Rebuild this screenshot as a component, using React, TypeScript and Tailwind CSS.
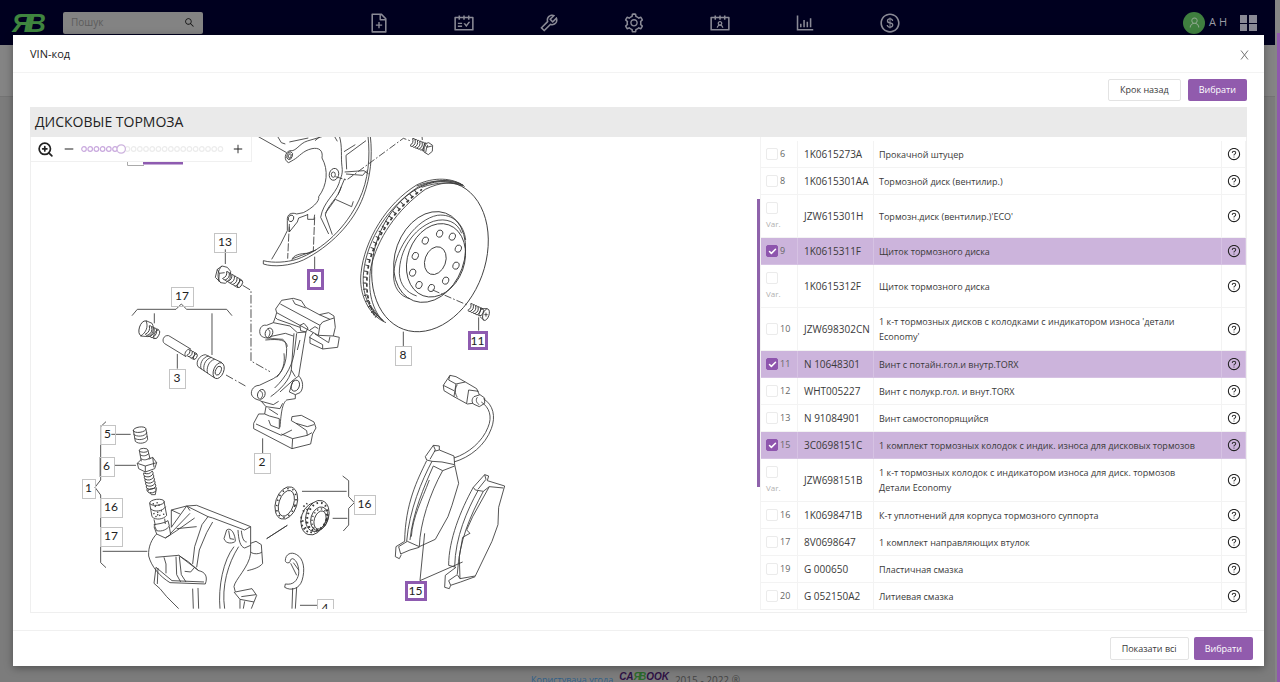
import { useState } from 'react'
import {
  AiOutlineBarChart,
  AiOutlineContacts,
  AiOutlineDollar,
  AiOutlineFileAdd,
  AiOutlineMinus,
  AiOutlinePlus,
  AiOutlineQuestionCircle,
  AiOutlineSchedule,
  AiOutlineSearch,
  AiOutlineSetting,
  AiOutlineTool,
  AiOutlineUser,
} from 'react-icons/ai'
import { Check, ZoomIn } from 'lucide-react'

interface Part {
  pos?: string
  code: string
  name: string
}

const parts: Part[] = [
  { pos: '6', code: '1K0615273A', name: 'Прокачной штуцер' },
  { pos: '8', code: '1K0615301AA', name: 'Тормозной диск (вентилир.)' },
  { code: 'JZW615301H', name: "Тормозн.диск (вентилир.)'ECO'" },
  { pos: '9', code: '1K0615311F', name: 'Щиток тормозного диска' },
  { code: '1K0615312F', name: 'Щиток тормозного диска' },
  { pos: '10', code: 'JZW698302CN', name: "1 к-т тормозных дисков с колодками с индикатором износа 'детали Economy'" },
  { pos: '11', code: 'N 10648301', name: 'Винт с потайн.гол.и внутр.TORX' },
  { pos: '12', code: 'WHT005227', name: 'Винт с полукр.гол. и внут.TORX' },
  { pos: '13', code: 'N 91084901', name: 'Винт самостопорящийся' },
  { pos: '15', code: '3C0698151C', name: '1 комплект тормозных колодок с индик. износа для дисковых тормозов' },
  { code: 'JZW698151B', name: '1 к-т тормозных колодок с индикатором износа для диск. тормозов Детали Economy' },
  { pos: '16', code: '1K0698471B', name: 'К-т уплотнений для корпуса тормозного суппорта' },
  { pos: '17', code: '8V0698647', name: '1 комплект направляющих втулок' },
  { pos: '19', code: 'G 000650', name: 'Пластичная смазка' },
  { pos: '20', code: 'G 052150A2', name: 'Литиевая смазка' },
]

const navItems = [
  { label: 'Новий запис', Icon: AiOutlineFileAdd },
  { label: 'Календар', Icon: AiOutlineSchedule },
  { label: 'Ремонт', Icon: AiOutlineTool },
  { label: 'Налаштування', Icon: AiOutlineSetting },
  { label: 'Контакти', Icon: AiOutlineContacts },
  { label: 'Звіти', Icon: AiOutlineBarChart },
  { label: 'Фінанси', Icon: AiOutlineDollar },
]

const callouts = [
  { text: '13', x: 214, y: 233, w: 22, h: 19 },
  { text: '17', x: 171, y: 287, w: 22, h: 19 },
  { text: '3', x: 169, y: 369, w: 16, h: 19 },
  { text: '2', x: 254, y: 453, w: 16, h: 20 },
  { text: '8', x: 395, y: 346, w: 16, h: 19 },
  { text: '9', x: 308, y: 270, w: 14, h: 18, active: true },
  { text: '11', x: 469, y: 332, w: 17, h: 16, active: true },
  { text: '5', x: 100, y: 425, w: 15, h: 19 },
  { text: '6', x: 99, y: 457, w: 15, h: 19 },
  { text: '1', x: 82, y: 479, w: 13, h: 19 },
  { text: '16', x: 100, y: 498, w: 22, h: 19 },
  { text: '17', x: 100, y: 527, w: 22, h: 19 },
  { text: '16', x: 354, y: 495, w: 21, h: 19 },
  { text: '15', x: 406, y: 582, w: 19, h: 17, active: true },
  { text: '4', x: 317, y: 599, w: 16, h: 19 },
]

const boltHoles = [
  [599, 311], [637, 320], [655, 356], [648, 407], [617, 452],
  [574, 474], [537, 465], [518, 428], [526, 378], [556, 332],
]

interface ThreadProps {
  from: [number, number]
  to: [number, number]
  turns: number
  r: number
}

// Threaded shank: two edges, the turns and a rounded tip
function Thread({ from, to, turns, r }: ThreadProps) {
  const length = Math.hypot(to[0] - from[0], to[1] - from[1])
  const angle = (Math.atan2(to[1] - from[1], to[0] - from[0]) * 180) / Math.PI
  const pitch = length / turns
  return (
    <g transform={`translate(${from[0]} ${from[1]}) rotate(${angle})`}>
      <ellipse cx={length} cy={0} rx={r / 2} ry={r} fill="#fff" />
      {Array.from({ length: turns }, (_, i) => (
        <path
          key={i}
          d={`M${i * pitch} ${-r} q${pitch * 0.6} -3 ${pitch} 0 M${i * pitch} ${r} q${pitch * 0.6} 3 ${pitch} 0 M${i * pitch} ${-r} q${r * 0.8} ${r} 0 ${r * 2}`}
        />
      ))}
    </g>
  )
}

function Shield() {
  return (
    <>
      <path d="M70 392V402C100 412 150 408 190 390C270 350 340 280 370 200C392 140 398 80 391 18" />
      <path d="M70 392C100 400 140 397 170 388C250 360 320 290 357 210C386 150 391 80 384 18" />
      <path d="M95 388L122 342L142 302V272C140 252 155 246 170 252L190 248C214 236 240 215 236 200C262 165 266 120 246 84C250 60 236 52 216 56C188 62 178 80 160 90L146 98C130 92 134 66 150 62C168 66 178 40 202 33L246 20" />
      <path d="M148 290V306L172 276L176 264L203 254M203 252V268H222L224 254" />
      <ellipse cx="153" cy="265" rx="8" ry="10" transform="rotate(20 153 265)" />
      <ellipse cx="149" cy="77" rx="8" ry="12" transform="rotate(20 149 77)" />
      <ellipse cx="149" cy="78" rx="4" ry="7" transform="rotate(20 149 78)" />
      <path d="M55 20L140 68M112 18L124 38L136 42M148 36L205 24M225 32L240 20" />
      <path d="M284 20L292 34M298 18C308 50 302 80 306 110C310 135 300 145 297 160C285 195 250 215 242 262L266 312" />
      <path d="M314 146L294 194M304 170C295 205 262 225 256 255L277 314M256 250L286 208L335 230L340 214" />
      <path d="M312 65L346 44M318 76L378 32M318 76L320 118M314 126L372 122L386 132M318 132L368 136L380 122" />
      <ellipse cx="282" cy="133" rx="14" ry="18" transform="rotate(15 282 133)" />
      <ellipse cx="280" cy="134" rx="6" ry="8" />
      <path d="M148 282L143 386M224 262L220 362" strokeDasharray="24 5" />
      <path d="M156 390C158 376 180 370 205 370L222 362M158 386L228 360M224 380V418" />
      <path d="M286 140L320 150L490 25L510 32" strokeDasharray="22 6 5 6" />
      <Thread from={[514, 36]} to={[556, 52]} turns={6} r={11} />
      <path fill="#fff" d="M553 42L566 38L578 46L577 64L565 74L552 66ZM553 42L560 52L576 48M560 52L557 68M546 18L547 30" />
    </>
  )
}

function Disc() {
  return (
    <>
      <path d="M438 578C385 556 356 490 363 430C373 330 440 220 530 165C580 140 640 142 674 170" />
      <path d="M432 574C385 540 364 490 371 425C382 325 446 228 536 170C590 146 640 146 670 166" />
      <path d="M410 560C374 520 368 470 379 415C394 330 454 240 534 178" strokeWidth="11" strokeDasharray="3 15" />
      <path d="M404 556C378 510 376 460 386 405C404 325 460 242 546 178" strokeWidth="5" strokeDasharray="10 8" />
      <path d="M530 168C580 148 630 148 665 164M545 172C590 156 636 155 668 168M400 545L430 572M390 525L420 565" />
      <path d="M428 572C390 530 384 470 392 415C412 325 470 240 556 178C600 156 640 154 670 166" />
      <ellipse cx="570" cy="380" rx="166" ry="232" transform="rotate(20 570 380)" />
      <ellipse cx="569" cy="381" rx="103" ry="140" transform="rotate(20 569 381)" />
      <path d="M677 330C672 285 640 250 592 256C530 268 468 350 461 430C458 470 480 500 510 506" />
      <path d="M665 310C652 276 620 262 580 274C520 296 478 360 478 430C480 465 500 488 530 498" />
      <ellipse cx="588" cy="391" rx="85" ry="113" transform="rotate(20 588 391)" />
      <ellipse cx="586" cy="392" rx="31" ry="43" transform="rotate(20 586 392)" />
      {boltHoles.map(([x, y]) => (
        <ellipse key={`${x}-${y}`} cx={x} cy={y} rx="9" ry="11" transform={`rotate(20 ${x} ${y})`} />
      ))}
      <path d="M578 480L684 526" strokeDasharray="22 6 5 6" />
      <Thread from={[688, 531]} to={[724, 547]} turns={5} r={11} />
      <ellipse cx="738" cy="554" rx="9" ry="18" transform="rotate(18 738 554)" fill="#fff" />
      <path d="M722 536L742 536M720 560L732 571M733 554H743M738 548V560M716 562V602M490 605V648" />
    </>
  )
}

function Carrier() {
  return (
    <>
      <path d="M376 58V102M96 257L112 238H228L244 222L260 238H380L396 257M163 250V280M336 250V375M232 372V416M488 625V670" />
      <path fill="#fff" d="M352 118L366 108L382 112L392 124L390 146L376 160L362 158L346 142Z" />
      <path d="M352 118L358 130L356 154M358 130L374 128M366 108C352 120 350 146 362 158" />
      <Thread from={[374, 135]} to={[420, 162]} turns={6} r={12} />
      <path d="M428 166L453 181V393L510 425" strokeDasharray="26 6 5 6" />

      <ellipse cx="130" cy="295" rx="12" ry="23" transform="rotate(18 130 295)" />
      <path fill="#fff" d="M138 272L156 280C166 296 156 318 144 320L122 318C138 308 146 290 138 272" />
      <Thread from={[142, 300]} to={[170, 313]} turns={4} r={14} />

      <path d="M206 317L272 357M194 341L258 380M206 317C190 314 184 334 194 341M272 357C258 356 250 374 258 380" />
      <Thread from={[265, 368]} to={[286, 380]} turns={3} r={9} />

      <path d="M316 374L366 398M294 410L344 444" />
      <path d="M316 374C298 376 286 396 294 410M326 378C306 382 298 404 304 418M334 382C314 388 308 410 313 424M344 388C326 392 318 416 323 430" />
      <ellipse cx="356" cy="422" rx="15" ry="25" transform="rotate(22 356 422)" />
      <ellipse cx="355" cy="422" rx="8" ry="14" transform="rotate(22 355 422)" />
      <path d="M378 435L440 470" strokeDasharray="24 7 5 7" />

      <path d="M527 237L545 211L580 205L604 212L617 232L658 254L686 248L702 258L706 292L700 318L718 322L713 352L668 357L630 340V320L640 308M527 237L530 248L655 316M541 222L660 286M530 248L526 262L532 268L600 292M578 209L585 222L617 234M658 254L690 268L702 264M660 286L668 276L690 268M655 316L700 318M655 316L660 286M645 312L686 338L690 320M628 322L668 344V357" />
      <path d="M526 262L520 278L500 286C484 282 474 300 482 316C494 328 508 322 518 326L548 328C558 334 558 344 560 356C560 400 548 430 520 446L478 466C458 466 448 488 458 500C466 510 476 508 484 514L498 530L540 536L548 520" />
      <path d="M520 278L570 288L592 308L618 306L612 340L596 438C610 450 612 476 600 488L586 494V506L560 510C548 520 544 540 540 592" />
      <path d="M496 330C540 326 560 330 562 350M510 320L556 310L580 318M582 310L574 420C570 450 540 480 512 500M590 310L584 360C580 400 560 440 524 474M600 330L592 360M574 420L586 440M552 370C556 400 548 424 530 442M596 438L580 450L568 486L586 494M580 450L540 486" />
      <ellipse cx="507" cy="309" rx="11" ry="15" transform="rotate(20 507 309)" />
      <path d="M503 298C512 300 512 314 504 322" />
      <ellipse cx="484" cy="493" rx="11" ry="15" transform="rotate(20 484 493)" />
      <path d="M480 482C490 486 490 500 482 506" />
      <ellipse cx="586" cy="467" rx="12" ry="17" transform="rotate(20 586 467)" />
      <path d="M600 286L612 280L624 294L618 306L602 302ZM630 300L645 290L655 296" />
      <path d="M498 530L494 552H476L461 580V596L576 656L632 642L638 612L648 594L642 576L604 556L576 560L574 572L588 580L622 590L642 584M494 552L508 558L538 566V596L512 586L506 570M468 582L544 616L576 600M576 656L578 626L544 612M578 626L622 616L620 602L588 580M622 616L636 608M506 536L534 554M484 514L520 524L536 514" />
    </>
  )
}

function Caliper() {
  return (
    <>
      <path d="M78 65L62 80V240L45 262L62 285V488L78 503M94 103H152M104 196H168M68 454H202" />
      <path d="M160 90L166 124C176 134 200 130 203 118L198 88M160 102C170 112 194 110 201 98M163 114C172 122 196 120 202 108" />
      <ellipse cx="179" cy="89" rx="19" ry="8" transform="rotate(-8 179 89)" />
      <ellipse cx="191" cy="151" rx="13" ry="6" />
      <path d="M178 151L184 184M204 151L210 176M180 164C188 170 200 168 207 160M184 176C190 182 204 180 210 172M184 178L172 190L176 206L196 216L224 206L230 188L218 172L206 178M172 190L196 198L230 188M196 198V216M218 172L222 202" />
      <Thread from={[204, 216]} to={[216, 272]} turns={6} r={13} />
      <path d="M210 276L214 284H226L228 272" />
      <ellipse cx="231" cy="307" rx="22" ry="9" transform="rotate(-6 231 307)" />
      <path d="M209 310L216 350C226 362 252 358 260 346L252 304M212 326C222 338 248 334 257 320M222 358L226 376M254 356L256 372" />
      <path d="M218 312L240 306M224 320L246 312M220 342L250 330M226 350L254 342M232 346L240 336" strokeWidth="4" strokeDasharray="4 8" />
      <path d="M222 374L230 392C246 396 262 388 268 378L264 362C254 370 232 372 222 374M222 380L230 402L256 414L272 404L268 380" />
      <path d="M230 402C216 416 204 440 206 468C214 500 240 530 270 548L376 552C384 530 376 516 356 512L296 466L226 472M274 382L320 318L350 316L512 380V460C508 500 464 540 462 560L466 576L516 566L530 586L522 606L514 626" />
      <path d="M274 382V330L320 318L384 350L366 374L344 440L338 492M398 366L380 398L358 450L350 502M384 350L398 354L494 390L512 380M274 330L300 342M256 414L290 392L344 354M270 402L330 340M290 386L350 380M322 320L330 332" />
      <path d="M228 502L222 550L240 566L260 590L296 626M234 504L232 552M252 472L258 492L258 520M288 470L290 524L302 546M298 470L304 524L318 546M296 466L326 486L356 512M314 514L332 516L344 502M228 502L276 542L372 546" />
      <path d="M338 566L340 626M354 564L356 626M462 440C430 480 414 560 420 626M476 440C444 490 424 560 434 626M440 390L432 416C438 434 460 430 466 424C466 404 454 380 440 390M446 392L450 416L462 418M474 390C476 420 480 440 494 444L512 436M484 392C486 410 490 426 500 426" />
      <path d="M512 430L528 424L544 434L548 490C540 502 520 508 502 512M512 456C520 464 540 462 546 456M462 576L480 598L522 606M480 598V626M494 604L490 626M484 590L528 584M560 416L622 376" />
    </>
  )
}

function Pads() {
  return (
    <>
      <path d="M278 318L296 332V380L313 398L296 415V465L280 483M156 364H290M248 445H292M50 506L112 466M150 706H204" />
      <ellipse cx="109" cy="399" rx="32" ry="50" transform="rotate(18 109 399)" />
      <ellipse cx="109" cy="400" rx="22" ry="40" transform="rotate(18 109 400)" />
      <ellipse cx="109" cy="399" rx="27" ry="45" transform="rotate(18 109 399)" strokeWidth="5" strokeDasharray="4 12" />
      <ellipse cx="190" cy="446" rx="36" ry="50" transform="rotate(18 190 446)" />
      <ellipse cx="202" cy="438" rx="34" ry="48" transform="rotate(18 202 438)" fill="#fff" />
      <ellipse cx="208" cy="446" rx="25" ry="36" transform="rotate(18 208 446)" />
      <ellipse cx="210" cy="450" rx="17" ry="28" transform="rotate(18 210 450)" />
      <ellipse cx="202" cy="440" rx="29" ry="43" transform="rotate(18 202 440)" strokeWidth="6" strokeDasharray="5 9" />
      <ellipse cx="208" cy="448" rx="21" ry="32" transform="rotate(18 208 448)" strokeWidth="4" strokeDasharray="4 8" />
      <path d="M154 440C150 470 166 492 194 486M160 410L172 400M158 424L178 416M156 452L176 460M164 474L182 470" strokeWidth="5" strokeDasharray="5 7" />

      <path d="M106 572C106 552 124 544 140 554C162 566 166 600 156 632C148 656 124 664 104 652L106 642C130 646 142 632 146 612C148 590 140 570 128 566C120 566 122 574 118 578C110 580 106 576 106 572M122 580L140 616M130 578L146 600M128 654L126 716M140 652L136 716" />

      <path d="M580 46L600 16L618 20L646 36L680 56L688 74L668 100L652 102L612 80L582 62ZM600 16L596 30L618 42L646 36M618 42L612 80M622 44C614 56 614 70 622 82M656 60L650 100M656 60L686 64M580 46L612 62" />
      <path fill="#fff" d="M672 80L690 74L704 84V100L688 110L670 102C664 94 666 86 672 80M682 82C676 90 680 100 688 104" />
      <path d="M700 86C730 104 738 140 724 176C706 226 660 262 612 276M694 96C718 112 728 140 714 172C698 214 656 250 612 264" />
      <path d="M526 260L550 226L568 228V240L612 258L614 284L626 340L606 406L594 440L556 508L508 530L472 514L446 530L452 552L480 540L508 532M526 260L530 270L546 274M550 226L556 240L540 268M568 240L552 244M546 274L576 276L614 284M546 274C516 330 478 420 470 514M530 272C502 330 466 400 464 514L438 530L436 560L448 566L454 554M550 288L578 302L614 288M578 302C540 370 510 460 508 530M550 288C522 350 488 430 480 510M538 330C516 390 488 440 484 500" />
      <path d="M670 352L704 314L716 318L712 332L764 348L746 412L744 464L726 514L676 618L630 626L622 614L596 632L602 646L632 636L676 620M670 352L676 360L700 364L718 350M704 314L708 328L684 358M718 350L760 354M670 352C632 420 596 510 596 586L618 592L586 616L584 652L598 656L602 646M684 362C652 420 616 500 614 590M700 364C660 440 628 510 622 612M718 350L668 440L650 480L660 490L638 502L628 560L630 626" />
      <path d="M524 490L510 632M638 576L510 632" />
    </>
  )
}

function Diagram() {
  return (
    <svg
      viewBox="31 137 726 472"
      preserveAspectRatio="xMinYMin meet"
      className="block w-full"
      role="img"
      aria-label="Дисковые тормоза"
    >
      <g fill="none" stroke="#3a3a3a" strokeWidth="2.6" strokeLinejoin="round">
        <g transform="translate(240 130) scale(0.3333)">
          <Shield />
          <Disc />
        </g>
        <g transform="translate(100 230) scale(0.3333)">
          <Carrier />
        </g>
        <g transform="translate(80 400) scale(0.3333)">
          <Caliper />
        </g>
        <g transform="translate(250 370) scale(0.3333)">
          <Pads />
        </g>
      </g>
      <path d="M127.5 160V165.5H144" fill="none" stroke="#aaa" />
      <path d="M143 163H183" stroke="#8e5bb0" strokeWidth="3" />
      {callouts.map((c) => (
        <g key={`${c.x}-${c.y}`}>
          <rect
            x={c.x + 0.5}
            y={c.y + 0.5}
            width={c.w}
            height={c.h}
            fill="none"
            stroke={c.active ? '#8e5bb0' : '#c4c4c4'}
            strokeWidth={c.active ? 3 : 1}
          />
          <text x={c.x + c.w / 2} y={c.y + 13} textAnchor="middle" className="font-['Lato',sans-serif] text-[12px]" fill="#222">
            {c.text}
          </text>
        </g>
      ))}
    </svg>
  )
}

function ZoomBar() {
  const [zoom, setZoom] = useState(6)
  return (
    <div className="absolute left-0 top-0 flex h-[25px] w-[221px] items-center border-r border-b border-[#f0f0f0] bg-white pl-1.5 text-[#222]">
      <ZoomIn size={17} strokeWidth={2.4} />
      <button aria-label="Зменшити" onClick={() => setZoom(Math.max(0, zoom - 1))} className="ml-[9px]">
        <AiOutlineMinus size={12} />
      </button>
      <div className="relative ml-[5px] h-3 w-[146px]">
        <svg viewBox="0 0 146 12" className="block h-3 w-[146px]">
          {Array.from({ length: 23 }, (_, i) => (
            <circle key={i} cx={4 + i * 6.2} cy="6" r="2.3" fill="#fff" stroke={i < zoom ? '#c9a9de' : '#ececec'} strokeWidth="1.2" />
          ))}
          <circle cx={4 + zoom * 6.2} cy="6" r="4.2" fill="#fff" stroke="#cdb3de" strokeWidth="1.2" />
        </svg>
        <input
          type="range"
          min={0}
          max={22}
          value={zoom}
          aria-label="Масштаб"
          onChange={(e) => setZoom(Number(e.target.value))}
          className="absolute inset-0 w-full opacity-0"
        />
      </div>
      <button aria-label="Збільшити" onClick={() => setZoom(Math.min(22, zoom + 1))} className="ml-1.5">
        <AiOutlinePlus size={12} />
      </button>
    </div>
  )
}

function PartRow({ part, checked, onToggle }: { part: Part; checked: boolean; onToggle: () => void }) {
  const tall = !part.pos || part.pos === '10'
  const cell = checked ? 'border-r border-b border-[#d6c2e3]' : 'border-r border-b border-[#f3f3f3]'
  return (
    <tr className={`${tall ? 'h-[43px]' : 'h-[27px]'} ${checked ? 'bg-[#ccb4dc]' : ''}`}>
      <td className={`${cell} pl-[5px]`}>
        <label className={part.pos ? 'flex items-center gap-0.5' : 'flex flex-col items-start gap-1'}>
          <span className="grid size-3 shrink-0 place-items-center">
            <input
              type="checkbox"
              checked={checked}
              onChange={onToggle}
              className="col-start-1 row-start-1 size-3 appearance-none rounded-xs border border-[#ebebeb] bg-white checked:border-[#8e55ae] checked:bg-[#8e55ae]"
            />
            {checked && <Check size={9} strokeWidth={4} className="pointer-events-none col-start-1 row-start-1 text-white" />}
          </span>
          {part.pos ? (
            <span className="text-[9px] leading-3 text-[#666]">{part.pos}</span>
          ) : (
            <span className="text-[8px] leading-3 text-[#b0b0b0]">Var.</span>
          )}
        </label>
      </td>
      <td className={`${cell} pl-1.5 text-[10px] whitespace-nowrap`}>{part.code}</td>
      <td className={`${cell} pr-4 pl-[5px] text-[9px] leading-[15px]`}>{part.name}</td>
      <td className={cell}>
        <button aria-label="Інформація" className="mx-auto block text-[#222]">
          <AiOutlineQuestionCircle size={14} />
        </button>
      </td>
    </tr>
  )
}

export default function App() {
  const [selected, setSelected] = useState(['1K0615311F', 'N 10648301', '3C0698151C'])

  const toggle = (code: string) => {
    setSelected(selected.includes(code) ? selected.filter((c) => c !== code) : [...selected, code])
  }

  return (
    <div className="flex h-screen overflow-hidden font-['Open_Sans','Noto_Sans',sans-serif] text-[#3a3a3a]">
      <div className="relative flex min-w-0 flex-1 flex-col bg-[#7c7c7c]">
        <header className="flex h-[45px] shrink-0 items-center bg-[#00001f]">
          <div className="flex w-[336px] shrink-0 items-center pl-3">
            <a href="#" aria-label="CarBook" className="block">
              <svg width="35" height="24" viewBox="0 0 35 24" fill="#3f853f" className="overflow-visible font-['Liberation_Sans',sans-serif] text-[26px] font-bold italic">
                <text x="0" y="21">Я</text>
                <text x="15" y="21">B</text>
              </svg>
            </a>
            <div className="ml-4 flex h-[22px] w-[140px] items-center rounded-xs bg-[#838383] px-2">
              <input
                type="text"
                placeholder="Пошук"
                aria-label="Пошук"
                className="min-w-0 flex-1 bg-transparent text-[10px] outline-none placeholder:text-[#5c5c5c]"
              />
              <AiOutlineSearch size={11} className="text-[#111]" />
            </div>
          </div>
          <nav className="flex max-w-[597px] flex-1 justify-around">
            {navItems.map(({ label, Icon }) => (
              <a key={label} href="#" aria-label={label} className="text-[#8a8a96]">
                <Icon size={22} />
              </a>
            ))}
          </nav>
          <div className="mr-[18px] ml-auto flex items-center">
            <span className="grid size-[22px] place-items-center rounded-full bg-[#3f7f3f] text-[#8fa88f]">
              <AiOutlineUser size={13} />
            </span>
            <span className="ml-1 text-[11px] text-[#9a9aa4]">А Н</span>
            <button aria-label="Меню" className="ml-[13px] grid grid-cols-2 gap-px">
              <span className="h-2 w-[7px] bg-[#8a8a96]" />
              <span className="h-2 w-2 bg-[#8a8a96]" />
              <span className="h-[7px] w-[7px] bg-[#8a8a96]" />
              <span className="h-[7px] w-2 bg-[#8a8a96]" />
            </button>
          </div>
        </header>
        <div className="h-[52px] shrink-0 border-b border-[#747474] bg-[#848484]" />
        <footer className="mt-auto flex h-3 items-start justify-center gap-1.5 pr-1 text-[10px] leading-5">
          <a href="#" className="text-[9px] text-[#2f5f88]">Користувача угода</a>
          <span className="font-['Liberation_Sans',sans-serif] text-[10px] leading-[14px] font-bold italic text-[#2f1145]">
            CA<span className="text-[#2c6b2c]">Я</span><span className="-ml-0.5 text-[#2c6b2c]">B</span>OOK
          </span>
          <span className="text-[#444]">2015 - 2022 ®</span>
        </footer>

        <div role="dialog" aria-label="VIN-код" className="absolute inset-x-0 top-[35px] mr-[11px] ml-[13px] bg-white shadow-[0_2px_8px_rgba(0,0,0,0.35)]">
          <div className="flex h-[38px] items-center justify-between border-b border-[#f3f3f3] pt-0.5 pr-[15px] pl-[17px]">
            <h1 className="text-[11px] font-medium text-[#222]">VIN-код</h1>
            <button aria-label="Закрити" className="text-[#777]">
              <svg width="9" height="10" viewBox="0 0 9 10" fill="none" stroke="currentColor">
                <path d="M1 0.5L8 9.5M8 0.5L1 9.5" />
              </svg>
            </button>
          </div>

          <div className="px-[17px] pt-1.5 pb-[17px]">
            <div className="flex justify-end gap-[7px] text-[9px]">
              <button className="h-[22px] rounded-xs border border-[#e3e3e3] px-[11px]">Крок назад</button>
              <button className="h-[22px] rounded-xs bg-[#915bad] px-[11px] text-white">Вибрати</button>
            </div>

            <h2 className="mt-1.5 h-[30px] bg-[#eaeaea] pl-[5px] text-[14px] leading-[30px] font-medium text-[#222]">ДИСКОВЫЕ ТОРМОЗА</h2>

            <div className="flex border border-t-0 border-[#efefef] pb-0.5">
              <div className="relative min-w-0 flex-1 overflow-hidden">
                <Diagram />
                <ZoomBar />
              </div>
              <div className="w-[3px] shrink-0 pt-[62px]">
                <div className="h-72 bg-[#8e62ab]" />
              </div>
              <div className="w-2/5 border-l border-[#f3f3f3] pt-1">
                <table className="w-full table-fixed border-separate border-spacing-0">
                  <colgroup>
                    <col className="w-[37px]" />
                    <col className="w-[76px]" />
                    <col />
                    <col className="w-6" />
                  </colgroup>
                  <tbody>
                    {parts.map((part) => (
                      <PartRow key={part.code} part={part} checked={selected.includes(part.code)} onToggle={() => toggle(part.code)} />
                    ))}
                  </tbody>
                </table>
              </div>
            </div>
          </div>

          <div className="flex justify-end gap-[5px] border-t border-[#f0f0f0] px-[11px] py-1.5 text-[9px]">
            <button className="h-[23px] rounded-xs border border-[#e3e3e3] px-[11px]">Показати всі</button>
            <button className="h-[23px] rounded-xs bg-[#915bad] px-[11px] text-white">Вибрати</button>
          </div>
        </div>
      </div>

      {/* Page scrollbar */}
      <div className="flex w-[5px] shrink-0 justify-end bg-[#858585] pt-[33px]">
        <div className="w-[3px] bg-[#8f58ad]" />
      </div>
    </div>
  )
}
